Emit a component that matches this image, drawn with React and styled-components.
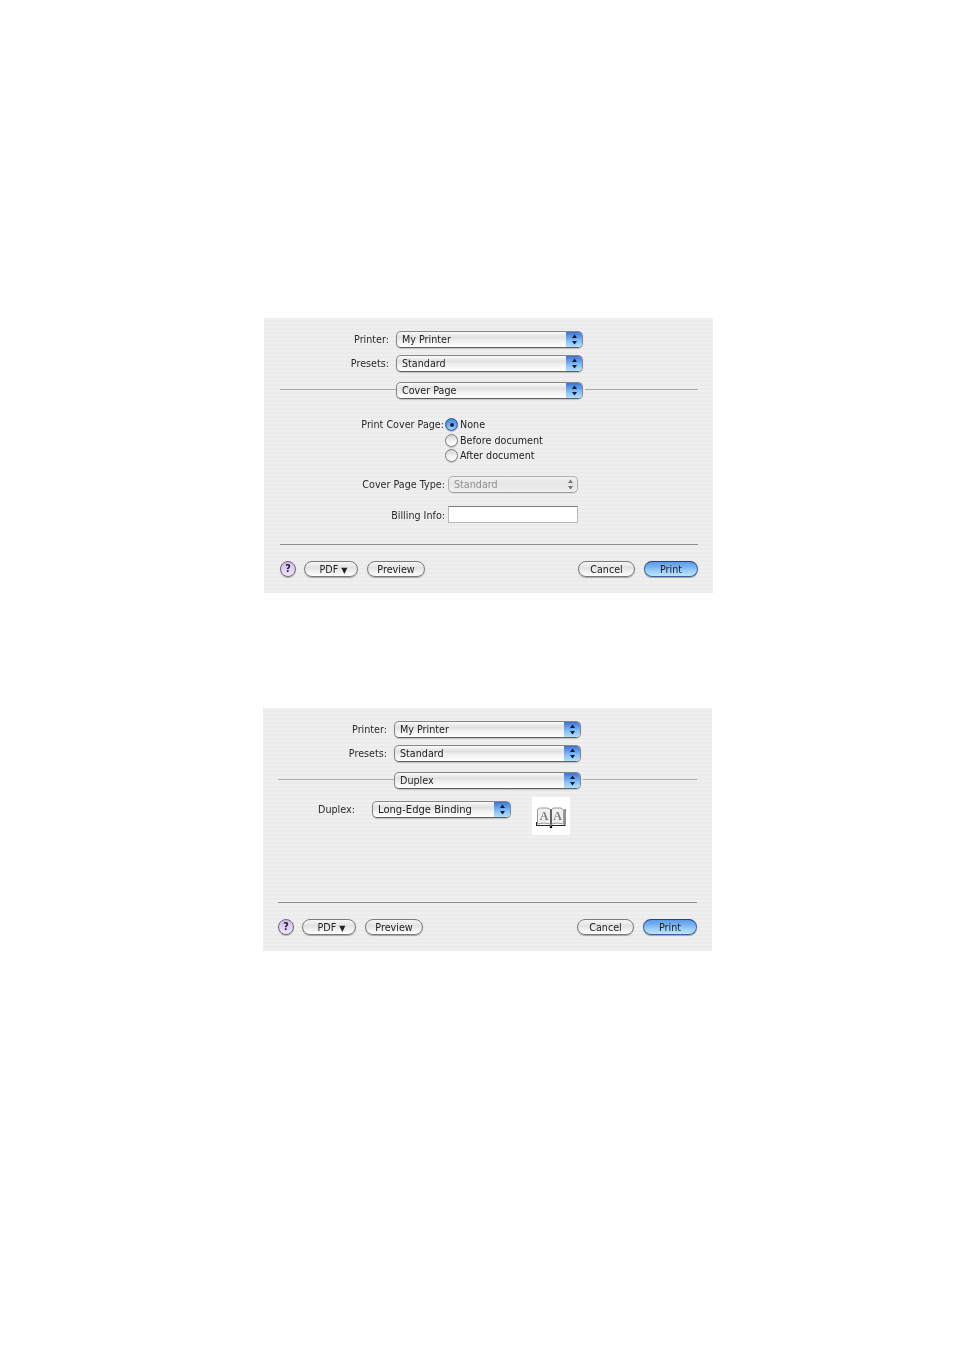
import React from 'react';
import styled, { createGlobalStyle, css } from 'styled-components';

const GlobalStyle = createGlobalStyle`
	html, body {
		margin: 0;
		padding: 0;
		background: #fff;
	}
	body {
		font-family: "DejaVu Sans", "Liberation Sans", sans-serif;
		font-size: 9.6px;
		color: #222;
	}
`;

const Page = styled.div`
	width: 954px;
	height: 1350px;
	padding-top: 318px;
	box-sizing: border-box;
	overflow: hidden;
`;

const Dialog = styled.section`
	box-sizing: border-box;
	width: 449px;
	height: ${(p) => p.$height}px;
	margin-left: ${(p) => p.$left}px;
	margin-bottom: 115px;
	padding: 13px 15px 0 ${(p) => p.$inset}px;
	background: repeating-linear-gradient(to bottom, #efefef 0, #efefef 2px, #ebebeb 2px, #ebebeb 4px);
	display: flex;
	flex-direction: column;
	filter: blur(0.35px);
`;

const PopupRow = styled.div`
	display: grid;
	grid-template-columns: 109px 187px;
	column-gap: 7px;
	align-items: center;
	margin-bottom: ${(p) => p.$gap}px;
`;

const Label = styled.label`
	text-align: right;
	white-space: nowrap;
	font-size: 9.6px;
	color: #2a2a2a;
`;

const PopupBox = styled.div`
	box-sizing: border-box;
	position: relative;
	width: ${(p) => p.$width}px;
	height: 17px;
	border: 1px solid ${(p) => (p.$disabled ? '#b0b0b0' : '#858585')};
	border-bottom-color: ${(p) => (p.$disabled ? '#a0a0a0' : '#5f5f5f')};
	border-radius: 5px;
	box-shadow: 0 1px 1px rgba(0, 0, 0, ${(p) => (p.$disabled ? 0.06 : 0.18)});
	background: ${(p) =>
		p.$disabled
			? 'linear-gradient(#f1f1f1, #e5e5e5 45%, #f0f0f0)'
			: 'linear-gradient(#fafafa, #e0e0e0 35%, #eeeeee 55%, #ffffff)'};
	color: ${(p) => (p.$disabled ? '#919191' : '#222')};
	display: flex;
	align-items: center;
	justify-content: space-between;
	overflow: hidden;
	line-height: 15px;
`;

const PopupText = styled.span`
	padding-left: 5px;
	font-size: ${(p) => p.$size}px;
	white-space: nowrap;
`;

const ArrowCap = styled.span`
	box-sizing: border-box;
	width: ${(p) => (p.$disabled ? 13 : 16)}px;
	height: 100%;
	display: flex;
	align-items: center;
	justify-content: center;
	${(p) =>
		!p.$disabled &&
		css`
			background: linear-gradient(#3d74d2, #6aa6ec 40%, #86c0f8 60%, #b2e0fd);
		`}
`;

const SectionRow = styled.div`
	display: flex;
	align-items: center;
`;

const Rule = styled.div`
	height: 1px;
	background: ${(p) => p.$color || '#ababab'};
	${(p) => (p.$width ? `width: ${p.$width}px;` : 'flex: 1;')}
	${(p) => (p.$gap ? `margin-left: ${p.$gap}px;` : '')}
`;

const SectionRule = styled(Rule)`
	margin-bottom: 2px;
`;

const FooterRule = styled(Rule)`
	margin-top: ${(p) => p.$top}px;
	flex: none;
`;

const FieldGrid = styled.div`
	display: grid;
	grid-template-columns: 168px 1fr;
	margin-top: 18px;
`;

const FieldLabel = styled(Label)`
	padding-right: ${(p) => p.$pad || 3}px;
	line-height: ${(p) => p.$line || 17}px;
	margin-top: ${(p) => p.$top || 0}px;
`;

const RadioGroup = styled.div`
	display: flex;
	flex-direction: column;
	margin-left: -3px;
`;

const RadioRow = styled.div`
	display: flex;
	align-items: center;
	height: 15.5px;
	gap: 2px;
`;

const RadioDot = styled.span`
	box-sizing: border-box;
	width: 13px;
	height: 13px;
	border-radius: 50%;
	display: flex;
	align-items: center;
	justify-content: center;
	border: 1px solid ${(p) => (p.$on ? '#2b519c' : '#7d7d7d')};
	background: ${(p) =>
		p.$on
			? 'radial-gradient(circle at 50% 75%, #a8d8fc, #4f8ee0 70%)'
			: 'linear-gradient(#d4d4d4, #f4f4f4 60%, #fff)'};
	box-shadow: 0 1px 1px rgba(0, 0, 0, 0.18);
	&::after {
		content: '';
		display: ${(p) => (p.$on ? 'block' : 'none')};
		width: 4px;
		height: 4px;
		border-radius: 50%;
		background: #10204a;
	}
`;

const FieldControl = styled.div`
	margin-top: ${(p) => p.$top || 0}px;
`;

const TextField = styled.input`
	box-sizing: border-box;
	display: block;
	width: 130px;
	height: 17px;
	background: #fff;
	border: 1px solid #b8b8b8;
	border-top-color: #7c7c7c;
	outline: none;
	padding: 0;
`;

const Footer = styled.div`
	display: flex;
	align-items: flex-start;
	height: 17px;
	margin-top: 16px;
`;

const HelpButton = styled.button`
	box-sizing: border-box;
	width: 16px;
	height: 16px;
	padding: 0;
	border-radius: 50%;
	border: 1px solid #6a6a6a;
	background: linear-gradient(#cfbbf2, #e4d8fa 70%, #f1eafd);
	box-shadow: 0 1px 1px rgba(0, 0, 0, 0.25);
	font: bold 9.6px/14px "DejaVu Sans", sans-serif;
	color: #222;
	margin-right: 8px;
`;

const PillButton = styled.button`
	box-sizing: border-box;
	width: ${(p) => p.$width}px;
	height: 16px;
	padding: 1px 0 0 ${(p) => p.$pad || 0}px;
	margin-left: ${(p) => p.$left || 0}px;
	border-radius: 8px;
	font: 9.6px/14px "DejaVu Sans", sans-serif;
	color: #222;
	white-space: nowrap;
	box-shadow: 0 1px 1px rgba(0, 0, 0, 0.3);
	${(p) =>
		p.$primary
			? css`
					border: 1px solid #3d5f9f;
					border-top-color: #25418a;
					background: linear-gradient(#5c9be6, #7fb6ef 40%, #94ccf8 60%, #bde6fd);
				`
			: css`
					border: 1px solid #7b7b7b;
					background: linear-gradient(#f6f6f6, #e2e2e2 40%, #ececec 60%, #ffffff);
				`}
`;

const MenuMark = styled.span`
	font-size: 8px;
`;

const Spacer = styled.div`
	flex: 1;
`;

const DuplexRow = styled.div`
	display: flex;
	align-items: flex-start;
	margin-top: 8px;
	padding-left: 40px;
`;

const DuplexLabel = styled(Label)`
	width: 37px;
	margin-top: 4px;
	line-height: 17px;
	text-align: left;
	margin-right: 17px;
`;

const DuplexPopup = styled.div`
	margin-top: 4px;
	margin-right: 21px;
`;

const BookBox = styled.div`
	width: 38px;
	height: 38px;
	background: #fff;
	display: flex;
	align-items: center;
	justify-content: center;
	padding-top: 3px;
	box-sizing: border-box;
`;

const UpDown = ({ color }) => (
	<svg width="7" height="11" viewBox="0 0 7 11">
		<path d="M3.5 0.5 L6 4 H1 Z M1 7 H6 L3.5 10.5 Z" fill={color} />
	</svg>
);

const Popup = ({ width = 187, size = 9.6, disabled, children }) => (
	<PopupBox $width={width} $disabled={disabled}>
		<PopupText $size={size}>{children}</PopupText>
		<ArrowCap $disabled={disabled}>
			<UpDown color={disabled ? '#777' : '#0d1a3a'} />
		</ArrowCap>
	</PopupBox>
);

const BookIcon = () => (
	<svg width="30" height="22" viewBox="0 0 30 22">
		<path d="M1.5 17 V3 Q2 1 4 1 H11 Q14 1 14.5 3 V17 Q8 15 1.5 17 Z" fill="#efefef" stroke="#9a9a9a" />
		<path d="M15.5 17 V3 Q16 1 18 1 H25 L27.5 3 V17 Q21 15 15.5 17 Z" fill="#efefef" stroke="#9a9a9a" />
		<text x="8" y="13" textAnchor="middle" fontFamily="Liberation Serif" fontWeight="bold" fontSize="12" fill="#808080">A</text>
		<text x="21.5" y="13" textAnchor="middle" fontFamily="Liberation Serif" fontWeight="bold" fontSize="12" fill="#808080">A</text>
		<path d="M0.5 15 V19 M0.5 18.5 H14 M29 2 V19 M15.5 18.5 H29 M15 2 V20" stroke="#222" fill="none" />
		<circle cx="15" cy="20" r="1.3" fill="#111" />
	</svg>
);

const DialogHeader = ({ section }) => (
	<>
		<PopupRow $gap={7}>
			<Label>Printer:</Label>
			<Popup>My Printer</Popup>
		</PopupRow>
		<PopupRow $gap={10}>
			<Label>Presets:</Label>
			<Popup>Standard</Popup>
		</PopupRow>
		<SectionRow>
			<SectionRule $width={116} />
			<Popup>{section}</Popup>
			<SectionRule $gap={2} />
		</SectionRow>
	</>
);

const DialogFooter = () => (
	<Footer>
		<HelpButton>?</HelpButton>
		<PillButton $width={54} $pad={5}>PDF <MenuMark>▼</MenuMark></PillButton>
		<PillButton $width={58} $left={9}>Preview</PillButton>
		<Spacer />
		<PillButton $width={57}>Cancel</PillButton>
		<PillButton $width={54} $left={9} $primary>Print</PillButton>
	</Footer>
);

function App() {
	return (
		<Page>
			<GlobalStyle />
			<Dialog $height={275} $left={264} $inset={16}>
				<DialogHeader section="Cover Page" />
				<FieldGrid>
					<FieldLabel $line={16} $pad={4}>Print Cover Page:</FieldLabel>
					<RadioGroup>
						<RadioRow>
							<RadioDot $on />
							None
						</RadioRow>
						<RadioRow>
							<RadioDot />
							Before document
						</RadioRow>
						<RadioRow>
							<RadioDot />
							After document
						</RadioRow>
					</RadioGroup>
					<FieldLabel $top={12}>Cover Page Type:</FieldLabel>
					<FieldControl $top={12}>
						<Popup width={130} disabled>Standard</Popup>
					</FieldControl>
					<FieldLabel $top={13} $line={19}>Billing Info:</FieldLabel>
					<FieldControl $top={13}>
						<TextField type="text" readOnly />
					</FieldControl>
				</FieldGrid>
				<FooterRule $top={19} $color="#8e8e8e" />
				<DialogFooter />
			</Dialog>
			<Dialog $height={243} $left={263} $inset={15}>
				<DialogHeader section="Duplex" />
				<DuplexRow>
					<DuplexLabel>Duplex:</DuplexLabel>
					<DuplexPopup>
						<Popup width={139} size={10}>Long-Edge Binding</Popup>
					</DuplexPopup>
					<BookBox>
						<BookIcon />
					</BookBox>
				</DuplexRow>
				<FooterRule $top={67} $color="#8e8e8e" />
				<DialogFooter />
			</Dialog>
		</Page>
	);
}

export default App;
